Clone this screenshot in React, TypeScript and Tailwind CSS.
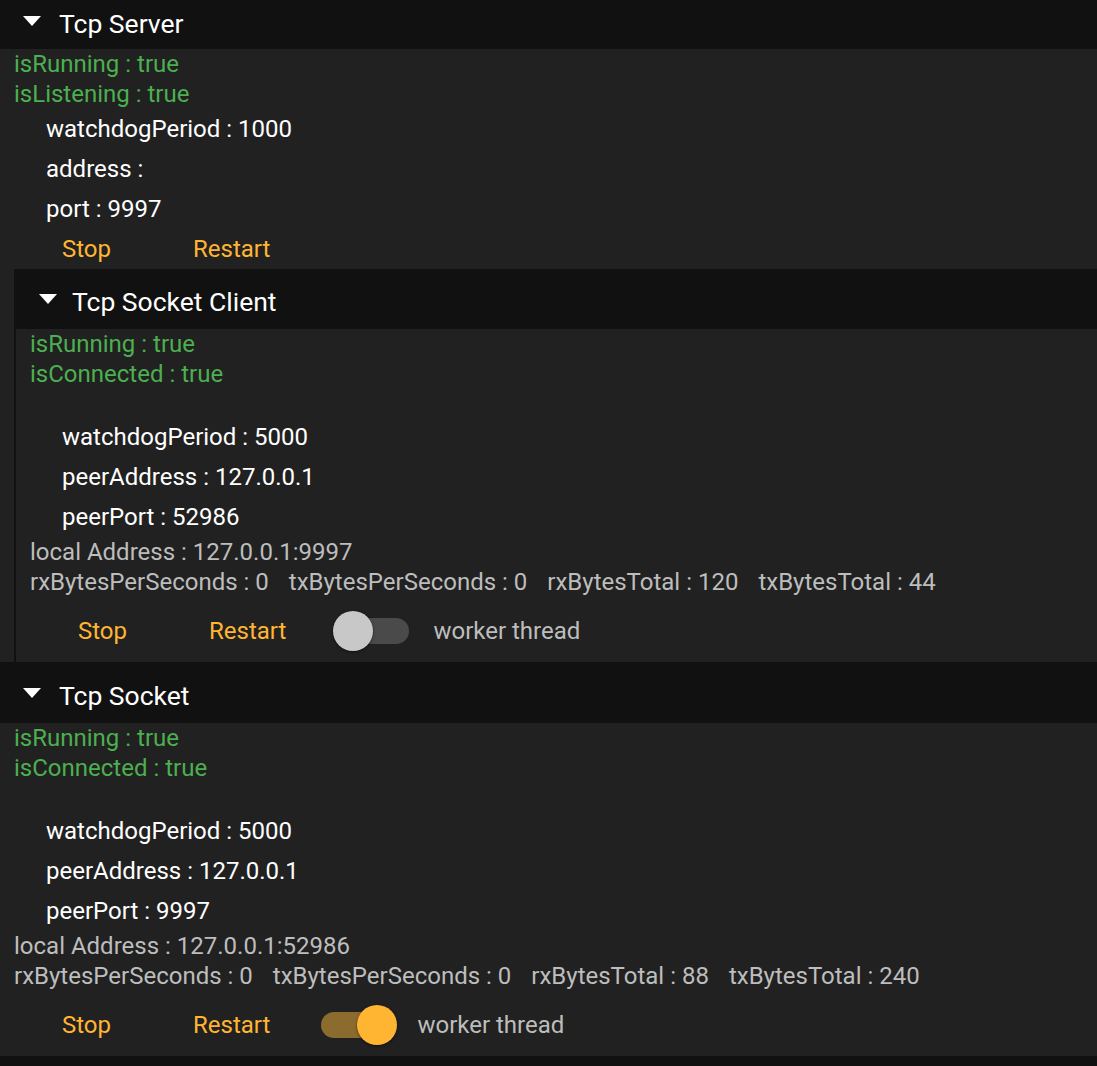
import React from "react";

const FONT = { fontFamily: "Roboto, 'Noto Sans', sans-serif" };

function Caret() {
  return (
    <svg width="18" height="10" viewBox="0 0 18 10" className="mb-[7px] shrink-0">
      <polygon points="0,0 18,0 9,10" fill="#ffffff" />
    </svg>
  );
}

function Header({ title, first, nested }: { title: string; first?: boolean; nested?: boolean }) {
  return (
    <div
      className={`flex items-center bg-[#111111] pl-[23px] ${
        first ? "h-[49px]" : nested ? "h-[60px] pt-[7px]" : "h-[61px] pt-[7px]"
      }`}
    >
      <Caret />
      <span className={`text-[26.5px] leading-none text-white ${nested ? "ml-[15px]" : "ml-[18px]"}`}>
        {title}
      </span>
    </div>
  );
}

function Flag({ label }: { label: string }) {
  return <div className="h-[30px] text-[24px] leading-[30px] text-[#4caf50]">{label} : true</div>;
}

function Prop({ label, value }: { label: string; value: string }) {
  return (
    <div className="h-[40px] pl-[32px] text-[24px] leading-[40px] text-white">
      {label} : {value}
    </div>
  );
}

function Info({ children }: { children: React.ReactNode }) {
  return <div className="flex h-[30px] gap-5 text-[24px] leading-[30px] text-[#bdbdbd]">{children}</div>;
}

function Switch({ on }: { on: boolean }) {
  return (
    <div className="relative h-[40px] w-[80px]">
      <div
        className={`absolute left-[4px] top-[7px] h-[26px] w-[72px] rounded-full ${
          on ? "bg-[#8c6b2e]" : "bg-[#4a4a4a]"
        }`}
      />
      <div
        className={`absolute top-0 h-[40px] w-[40px] rounded-full shadow-[0_1px_3px_rgba(0,0,0,0.5)] ${
          on ? "left-[40px] bg-[#ffb532]" : "left-0 bg-[#c8c8c8]"
        }`}
      />
    </div>
  );
}

function Buttons({ toggle }: { toggle?: boolean }) {
  const hasToggle = toggle !== undefined;
  return (
    <div className={`flex items-center pl-[48px] text-[24px] ${hasToggle ? "h-[65px] pt-[2px]" : "h-[40px]"}`}>
      <button className="text-[#ffb532]">Stop</button>
      <button className="ml-[82px] text-[#ffb532]">Restart</button>
      {hasToggle && (
        <>
          <div className="ml-[47px]">
            <Switch on={!!toggle} />
          </div>
          <span className="ml-[20px] text-[#bdbdbd]">worker thread</span>
        </>
      )}
    </div>
  );
}

function SocketBody({
  peerPort,
  local,
  rx,
  tx,
  toggle,
}: {
  peerPort: string;
  local: string;
  rx: string;
  tx: string;
  toggle: boolean;
}) {
  return (
    <div className="bg-[#212121] pl-[14px]">
      <Flag label="isRunning" />
      <Flag label="isConnected" />
      <div className="h-[28px]" />
      <Prop label="watchdogPeriod" value="5000" />
      <Prop label="peerAddress" value="127.0.0.1" />
      <Prop label="peerPort" value={peerPort} />
      <Info>
        <span>local Address : {local}</span>
      </Info>
      <Info>
        <span>rxBytesPerSeconds : 0</span>
        <span>txBytesPerSeconds : 0</span>
        <span>rxBytesTotal : {rx}</span>
        <span>txBytesTotal : {tx}</span>
      </Info>
      <Buttons toggle={toggle} />
    </div>
  );
}

export default function App() {
  return (
    <div className="h-[1066px] w-full overflow-hidden bg-[#212121]" style={FONT}>
      <Header title="Tcp Server" first />
      <div className="bg-[#212121] pl-[14px]">
        <Flag label="isRunning" />
        <Flag label="isListening" />
        <Prop label="watchdogPeriod" value="1000" />
        <Prop label="address" value="" />
        <Prop label="port" value="9997" />
        <Buttons />
        <div className="border-l-2 border-[#111111]">
          <Header title="Tcp Socket Client" nested />
          <SocketBody peerPort="52986" local="127.0.0.1:9997" rx="120" tx="44" toggle={false} />
        </div>
      </div>
      <Header title="Tcp Socket" />
      <SocketBody peerPort="9997" local="127.0.0.1:52986" rx="88" tx="240" toggle={true} />
      <div className="h-[60px] bg-[#111111]" />
    </div>
  );
}
